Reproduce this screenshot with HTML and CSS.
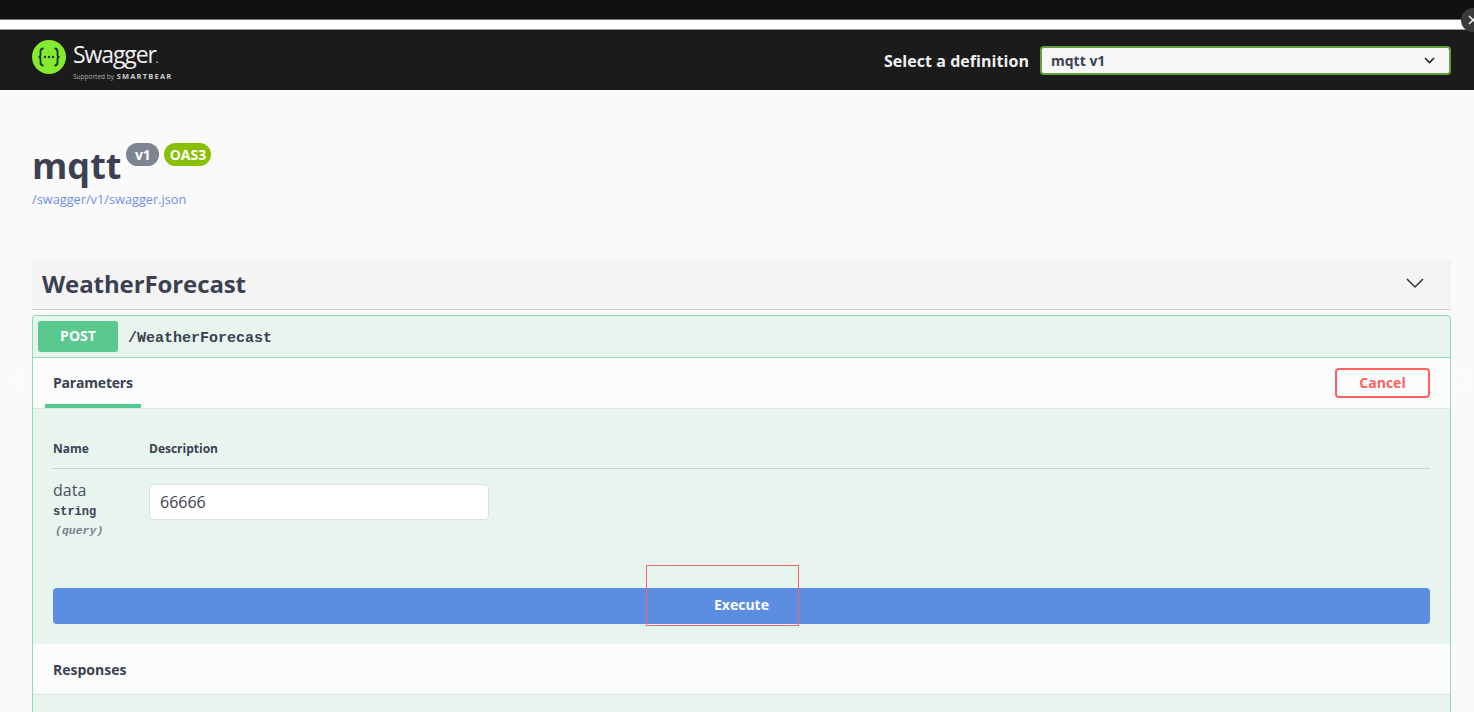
FILE: index.html
```html
<!DOCTYPE html>
<html lang="en">
<head>
  <meta charset="UTF-8" />
  <title>Swagger UI</title>
  <link rel="stylesheet" href="styles.css">
</head>
<body>
  <div class="top-strip"></div>
  <div class="white-strip"></div>

  <div class="topbar">
    <div class="logo">
      <svg class="logo-mark" width="34" height="34" viewBox="0 0 34 34">
        <circle cx="17" cy="17" r="17" fill="#85ea2d"/>
        <path d="M11.5 8.5c-2.5 0-3 1.2-3 3v3.5c0 1.300-.8 2-2 2 1.200 0 2 .7 2 2v3.500c0 1.800.5 3 3 3M22.500 8.500c2.500 0 3 1.200 3 3v3.500c0 1.300.8 2 2 2-1.200 0-2 .7-2 2v3.500c0 1.800-.5 3-3 3" fill="none" stroke="#173647" stroke-width="1.800"/>
        <circle cx="13" cy="17" r="1.200" fill="#173647"/>
        <circle cx="17" cy="17" r="1.200" fill="#173647"/>
        <circle cx="21" cy="17" r="1.200" fill="#173647"/>
      </svg>
      <div class="logo-text">
        <span class="logo-name">Swagger<small>.</small></span>
        <span class="logo-sub">Supported by <b>SMARTBEAR</b></span>
      </div>
    </div>
    <div class="definition">
      <span class="definition-label">Select a definition</span>
      <div class="definition-select">
        <span>mqtt v1</span>
        <svg width="11" height="7" viewBox="0 0 11 7"><path d="M1 1l4.500 4.500L10 1" fill="none" stroke="#222" stroke-width="1.600"/></svg>
      </div>
    </div>
  </div>

  <div class="wrapper">
    <div class="info">
      <div class="title-row">
        <h1 class="title">mqtt</h1>
        <span class="badge badge-version">v1</span>
        <span class="badge badge-oas">OAS3</span>
      </div>
      <a class="spec-link" href="#">/swagger/v1/swagger.json</a>
    </div>

    <div class="tag">
      <h2>WeatherForecast</h2>
      <svg width="18" height="11" viewBox="0 0 18 11"><path d="M1 1l8 8 8-8" fill="none" stroke="#333" stroke-width="1.500"/></svg>
    </div>

    <div class="opblock">
      <div class="summary">
        <span class="method">POST</span>
        <span class="path">/WeatherForecast</span>
      </div>

      <div class="section-head">
        <div class="tab">Parameters</div>
        <button class="cancel">Cancel</button>
      </div>

      <div class="params">
        <div class="param-head">
          <span class="col-name">Name</span>
          <span>Description</span>
        </div>
        <div class="param-row">
          <div class="col-name">
            <div class="param-name">data</div>
            <div class="param-type">string</div>
            <div class="param-in">(query)</div>
          </div>
          <input class="param-input" type="text" value="66666">
        </div>
      </div>

      <div class="execute-wrap">
        <button class="execute">Execute</button>
        <div class="annotation"></div>
      </div>

      <div class="section-head responses-head">Responses</div>
    </div>
  </div>

  <div class="close-btn">
    <svg width="10" height="10" viewBox="0 0 10 10"><path d="M1 1l8 8M9 1l-8 8" stroke="#eee" stroke-width="1.500"/></svg>
  </div>
  <svg class="carousel carousel-left" width="14" height="26" viewBox="0 0 14 26"><path d="M12 2 2 13l10 11" fill="none" stroke="#fff" stroke-width="1.500"/></svg>
  <svg class="carousel carousel-right" width="14" height="26" viewBox="0 0 14 26"><path d="M2 2l10 11L2 24" fill="none" stroke="#fff" stroke-width="1.500"/></svg>
</body>
</html>
```

FILE: styles.css
```css
html, body {
  height: 712px;
  overflow: hidden;
}
body {
  font-family: "Open Sans", sans-serif;
  margin: 0;
  background-color: #fafafa;
  color: #3b4151;
  position: relative;
}
.top-strip {
  height: 19px;
  background-color: #111;
  border-bottom: 1px solid #777;
}
.white-strip {
  height: 9px;
  background-color: #fff;
  border-bottom: 1px solid #999;
}
.topbar {
  height: 60px;
  background-color: #1b1b1b;
  display: flex;
  align-items: center;
  justify-content: space-between;
  padding: 0 23px 0 32px;
}
.logo {
  display: flex;
  align-items: center;
  gap: 7px;
  margin-top: -6px;
}
.logo-text {
  display: flex;
  flex-direction: column;
  margin-top: 9px;
}
.logo-name {
  color: #f0f0f0;
  font-size: 23px;
  line-height: 24px;
  letter-spacing: -1.1px;
}
.logo-name small {
  font-size: 10px;
}
.logo-sub {
  color: #aaa;
  font-size: 6.5px;
  line-height: 10px;
  white-space: nowrap;
}
.logo-sub b {
  color: #ccc;
  font-size: 7.5px;
  letter-spacing: 1.200px;
  margin-left: 1px;
}
.definition {
  display: flex;
  align-items: center;
  gap: 11px;
}
.definition-label {
  color: #f0f0f0;
  font-size: 16px;
  font-weight: 700;
  letter-spacing: 0.05px;
  margin-top: 1px;
}
.definition-select {
  width: 411px;
  height: 29px;
  box-sizing: border-box;
  border: 2px solid #62a03f;
  border-radius: 4px;
  background-color: #f7f7f7;
  display: flex;
  align-items: center;
  justify-content: space-between;
  padding: 0 14px 0 9px;
  font-size: 14px;
  font-weight: 700;
  color: #3b4151;
}
.wrapper {
  padding: 0 23px 0 32px;
}
.info {
  height: 169px;
  padding-top: 51px;
  box-sizing: border-box;
}
.title-row {
  display: flex;
  align-items: flex-start;
  height: 49px;
}
.title {
  margin: 0 5px 0 0;
  font-size: 36px;
  line-height: 49px;
  font-weight: 700;
}
.badge {
  height: 23px;
  margin-top: 2px;
  border-radius: 12px;
  color: #fff;
  font-size: 14px;
  font-weight: 700;
  line-height: 23px;
  text-align: center;
}
.badge-version {
  width: 33px;
  background-color: #7d8492;
  margin-right: 5px;
}
.badge-oas {
  width: 47px;
  background-color: #89bf04;
}
.spec-link {
  display: block;
  font-size: 12.75px;
  line-height: 18px;
  color: #6e90e6;
  text-decoration: none;
}
.tag {
  height: 51px;
  box-sizing: border-box;
  display: flex;
  align-items: center;
  justify-content: space-between;
  background-color: #f4f4f4;
  border-bottom: 1px solid #d8c9c9;
  padding: 0 27px 2px 10px;
}
.tag h2 {
  margin: 0;
  font-size: 24px;
  font-weight: 700;
  letter-spacing: -0.1px;
}
.opblock {
  margin-top: 5px;
  border: 1px solid #8fdcb6;
  border-bottom: none;
  border-radius: 4px 4px 0 0;
  background-color: #e8f4ee;
  height: 397px;
  overflow: hidden;
}
.summary {
  height: 42px;
  box-sizing: border-box;
  display: flex;
  align-items: center;
  padding: 0 5px;
  border-bottom: 1px solid #8fdcb6;
}
.method {
  width: 80px;
  height: 31px;
  background-color: #5ac98f;
  border-radius: 3px;
  color: #fff;
  font-size: 14px;
  font-weight: 700;
  line-height: 30px;
  text-align: center;
}
.path {
  margin: 3px 0 0 10px;
  font-family: "Liberation Mono", monospace;
  font-size: 15px;
  font-weight: 700;
  color: #3b4151;
}
.section-head {
  height: 51px;
  box-sizing: border-box;
  display: flex;
  align-items: center;
  justify-content: space-between;
  padding: 0 20px 0 12px;
  background-color: #fbfdfc;
  border-bottom: 1px solid #dfe6e2;
}
.tab {
  width: 96px;
  height: 50px;
  box-sizing: border-box;
  padding-left: 8px;
  border-bottom: 4px solid #52c98e;
  font-size: 14px;
  font-weight: 700;
  letter-spacing: -0.2px;
  line-height: 50px;
}
.cancel {
  width: 95px;
  height: 30px;
  background: transparent;
  border: 2px solid #ff6060;
  border-radius: 4px;
  color: #ff6060;
  font-family: "Open Sans", sans-serif;
  font-size: 14px;
  font-weight: 700;
  padding: 0 0 2px;
}
.params {
  padding: 0 20px;
  height: 179px;
  box-sizing: border-box;
}
.param-head {
  height: 60px;
  box-sizing: border-box;
  padding-top: 30px;
  display: flex;
  font-size: 12px;
  font-weight: 700;
  line-height: 20px;
  border-bottom: 1px solid #c9d3cd;
}
.col-name {
  width: 96px;
  flex-shrink: 0;
}
.param-row {
  display: flex;
  padding-top: 11px;
  align-items: flex-start;
}
.param-name {
  font-size: 16px;
  line-height: 20px;
  color: #4a5060;
}
.param-type {
  font-family: "Liberation Mono", monospace;
  font-size: 12px;
  font-weight: 700;
  line-height: 20px;
  margin-top: 2px;
}
.param-in {
  font-family: "Liberation Mono", monospace;
  font-size: 11.500px;
  font-style: italic;
  font-weight: 700;
  color: #7b7f88;
  line-height: 18px;
  padding-left: 2px;
}
.param-input {
  width: 340px;
  height: 36px;
  box-sizing: border-box;
  margin-top: 4px;
  border: 1px solid #dcdfdd;
  border-radius: 4px;
  background-color: #fff;
  padding: 0 10px;
  font-family: "Open Sans", sans-serif;
  font-size: 16px;
  color: #3b4151;
}
.execute-wrap {
  position: relative;
  padding: 0 20px;
  height: 56px;
}
.execute {
  display: block;
  width: 100%;
  height: 36px;
  border: none;
  border-radius: 4px;
  background-color: #5b8de0;
  color: #fff;
  font-family: "Open Sans", sans-serif;
  font-size: 14px;
  font-weight: 700;
  padding: 0 0 3px;
}
.annotation {
  position: absolute;
  left: 613px;
  top: -23px;
  width: 151px;
  height: 59px;
  border: 1px solid #f2686a;
}
.responses-head {
  font-size: 14px;
  font-weight: 700;
  height: 51px;
  padding-left: 20px;
}
.close-btn {
  position: absolute;
  left: 1461px;
  top: 8px;
  width: 24px;
  height: 24px;
  border-radius: 50%;
  background-color: #3a3a3a;
  display: flex;
  align-items: center;
  justify-content: center;
}
.carousel {
  position: absolute;
  top: 367px;
  opacity: 0.8;
}
.carousel-left {
  left: 12px;
}
.carousel-right {
  left: 1460px;
}
```
